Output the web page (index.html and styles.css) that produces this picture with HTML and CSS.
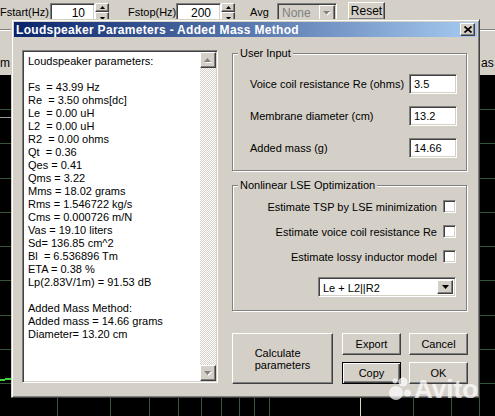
FILE: index.html
```html
<!DOCTYPE html>
<html>
<head>
<meta charset="utf-8">
<link rel="stylesheet" href="styles.css">
</head>
<body>
<div class="app">
  <div class="toolbar">
    <span class="tlabel l1">Fstart(Hz)</span>
    <div class="spin">
      <div class="sunken spin-edit">10</div>
      <div class="spin-btns">
        <div class="raised sbtn"><svg width="5" height="3" viewBox="0 0 5 3"><path d="M2.5 0L5 3H0Z" fill="#000"/></svg></div>
        <div class="raised sbtn"><svg width="5" height="3" viewBox="0 0 5 3"><path d="M0 0H5L2.5 3Z" fill="#000"/></svg></div>
      </div>
    </div>
    <span class="tlabel l2">Fstop(Hz)</span>
    <div class="spin">
      <div class="sunken spin-edit">200</div>
      <div class="spin-btns">
        <div class="raised sbtn"><svg width="5" height="3" viewBox="0 0 5 3"><path d="M2.5 0L5 3H0Z" fill="#000"/></svg></div>
        <div class="raised sbtn"><svg width="5" height="3" viewBox="0 0 5 3"><path d="M0 0H5L2.5 3Z" fill="#000"/></svg></div>
      </div>
    </div>
    <span class="tlabel l3">Avg</span>
    <div class="sunken combo-dis">
      <span class="combo-dis-text">None</span>
      <div class="raised combo-btn"><svg width="8" height="5" viewBox="0 0 8 5"><path d="M1 1H8L4.5 4.5Z" fill="#fff"/><path d="M0 0H7L3.5 3.5Z" fill="#808080"/></svg></div>
    </div>
    <div class="raised btn reset">Reset</div>
  </div>
  <div class="groove"></div>
  <div class="labels-row"><span class="lab-left">m</span><span class="lab-right">as</span></div>
  <div class="plot">
    <svg width="495" height="341" viewBox="0 0 495 341" shape-rendering="crispEdges">
      <g stroke="#35553a" stroke-width="1">
        <line x1="0" y1="34.5" x2="495" y2="34.5"/>
        <line x1="0" y1="68.5" x2="495" y2="68.5"/>
        <line x1="0" y1="103.5" x2="495" y2="103.5"/>
        <line x1="0" y1="137.5" x2="495" y2="137.5"/>
        <line x1="0" y1="171.5" x2="495" y2="171.5"/>
        <line x1="0" y1="205.5" x2="495" y2="205.5"/>
        <line x1="0" y1="240.5" x2="495" y2="240.5"/>
        <line x1="0" y1="274.5" x2="495" y2="274.5"/>
        <line x1="0" y1="308.5" x2="495" y2="308.5"/>
        <line x1="57.5" y1="0" x2="57.5" y2="341"/>
        <line x1="110.5" y1="0" x2="110.5" y2="341"/>
        <line x1="149.5" y1="0" x2="149.5" y2="341"/>
        <line x1="178.5" y1="0" x2="178.5" y2="341"/>
        <line x1="201.5" y1="0" x2="201.5" y2="341"/>
        <line x1="221.5" y1="0" x2="221.5" y2="341"/>
        <line x1="239.5" y1="0" x2="239.5" y2="341"/>
        <line x1="254.5" y1="0" x2="254.5" y2="341"/>
        <line x1="269.5" y1="0" x2="269.5" y2="341"/>
        <line x1="413.5" y1="0" x2="413.5" y2="341"/>
        <line x1="451.5" y1="0" x2="451.5" y2="341"/>
        <line x1="479.5" y1="0" x2="479.5" y2="341"/>
      </g>
      <line x1="360.5" y1="0" x2="360.5" y2="341" stroke="#d8dcb0" stroke-width="1"/>
      <line x1="0" y1="42.5" x2="11" y2="42.5" stroke="#9a9a9a" stroke-width="1"/>
      <line x1="0" y1="305" x2="11" y2="304" stroke="#3fd23f" stroke-width="2"/>
    </svg>
  </div>
</div>

<div class="dialog">
  <div class="title">
    <span class="title-text">Loudspeaker Parameters - Added Mass Method</span>
    <div class="raised close-btn"><svg width="8" height="7" viewBox="0 0 8 7"><path d="M0.5 0.5L7.5 6.5M7.5 0.5L0.5 6.5" stroke="#000" stroke-width="1.7"/></svg></div>
  </div>
  <div class="dbody">
    <div class="sunken memo">
      <div class="memo-text">Loudspeaker parameters:

Fs  = 43.99 Hz
Re  = 3.50 ohms[dc]
Le  = 0.00 uH
L2  = 0.00 uH
R2  = 0.00 ohms
Qt  = 0.36
Qes = 0.41
Qms = 3.22
Mms = 18.02 grams
Rms = 1.546722 kg/s
Cms = 0.000726 m/N
Vas = 19.10 liters
Sd= 136.85 cm^2
Bl  = 6.536896 Tm
ETA = 0.38 %
Lp(2.83V/1m) = 91.53 dB

Added Mass Method:
Added mass = 14.66 grams
Diameter= 13.20 cm</div>
      <div class="scrollbar">
        <div class="raised sb-btn"><svg width="8" height="5" viewBox="0 0 8 5"><path d="M4.5 1L8 5H1Z" fill="#fff"/><path d="M3.5 0L7 4H0Z" fill="#808080"/></svg></div>
        <div class="sb-track"></div>
        <div class="raised sb-btn"><svg width="8" height="5" viewBox="0 0 8 5"><path d="M1 1H8L4.5 5Z" fill="#fff"/><path d="M0 0H7L3.5 4Z" fill="#808080"/></svg></div>
      </div>
    </div>
    <div class="rcol">
      <fieldset class="group g1">
        <legend>User Input</legend>
        <div class="g1-rows">
          <div class="frow"><span>Voice coil resistance Re (ohms)</span><div class="sunken edit">3.5</div></div>
          <div class="frow"><span>Membrane diameter (cm)</span><div class="sunken edit">13.2</div></div>
          <div class="frow"><span>Added mass (g)</span><div class="sunken edit">14.66</div></div>
        </div>
      </fieldset>
      <fieldset class="group g2">
        <legend>Nonlinear LSE Optimization</legend>
        <div class="g2-rows">
          <div class="crow"><span>Estimate TSP by LSE minimization</span><div class="sunken check"></div></div>
          <div class="crow"><span>Estimate voice coil resistance Re</span><div class="sunken check"></div></div>
          <div class="crow"><span>Estimate lossy inductor model</span><div class="sunken check"></div></div>
          <div class="sunken combo">
            <span class="combo-text">Le + L2||R2</span>
            <div class="raised combo-btn"><svg width="7" height="4" viewBox="0 0 7 4"><path d="M0 0H7L3.5 4Z" fill="#000"/></svg></div>
          </div>
        </div>
      </fieldset>
      <div class="buttons">
        <div class="raised btn calc"><span class="calc-text">Calculate<br>parameters</span></div>
        <div class="btn-grid">
          <div class="raised btn">Export</div>
          <div class="raised btn">Cancel</div>
          <div class="raised btn default">Copy</div>
          <div class="raised btn">OK</div>
        </div>
      </div>
    </div>
  </div>
</div>

<div class="watermark">
  <svg width="26" height="26" viewBox="0 0 26 26">
    <circle cx="8" cy="17" r="7" fill="#fff"/>
    <circle cx="15" cy="6" r="4.5" fill="#fff"/>
    <circle cx="19.5" cy="17" r="3.5" fill="#fff"/>
    <circle cx="7" cy="5" r="2.5" fill="#fff"/>
  </svg>
  <span class="wm-text">Avito</span>
</div>
</body>
</html>
```

FILE: styles.css
```css
* { box-sizing: border-box; }

body {
  margin: 0;
  width: 495px;
  height: 416px;
  overflow: hidden;
  position: relative;
  background: #d4d0c8;
  font-family: "Liberation Sans", Arial, sans-serif;
  font-size: 11px;
  color: #000;
}

/* ---------- 3D primitives ---------- */
.sunken {
  background: #fff;
  border: 1px solid;
  border-color: #808080 #fff #fff #808080;
  box-shadow: inset 1px 1px #404040, inset -1px -1px #d4d0c8;
}
.raised {
  background: #d4d0c8;
  border: 1px solid;
  border-color: #fff #404040 #404040 #fff;
  box-shadow: inset -1px -1px #808080;
  display: flex;
  align-items: center;
  justify-content: center;
}

/* ---------- background application ---------- */
.app { display: flex; flex-direction: column; }

.toolbar {
  display: flex;
  align-items: flex-start;
  height: 24px;
  padding-top: 3px;
}
.tlabel {
  flex: none;
  height: 21px;
  line-height: 19px;
  white-space: nowrap;
  font-size: 11px;
}
.l1 { width: 50px; }
.l2 { width: 48px; margin-left: 19px; }
.l3 { width: 27px; margin-left: 15px; }

.spin { flex: none; display: flex; width: 59px; height: 21px; }
.spin-edit {
  width: 45px;
  height: 21px;
  text-align: right;
  padding-right: 9px;
  line-height: 18px;
  font-size: 12px;
}
.spin-btns { width: 14px; display: flex; flex-direction: column; }
.sbtn { height: 9px; }
.sbtn + .sbtn { height: 12px; }

.combo-dis {
  flex: none;
  width: 60px;
  height: 21px;
  background: #d4d0c8;
  display: flex;
  align-items: stretch;
  padding: 1px;
}
.combo-dis-text {
  flex: 1;
  color: #808080;
  line-height: 17px;
  padding-left: 3px;
  font-size: 12px;
}
.combo-btn { width: 16px; flex: none; }

.btn { font-size: 11px; }
.reset {
  flex: none;
  width: 37px;
  height: 18px;
  margin-left: 11px;
  margin-top: -1px;
  font-size: 12px;
}

.groove {
  margin-top: 5px;
  height: 2px;
  border-top: 1px solid #808080;
  border-bottom: 1px solid #fff;
}
.labels-row {
  margin-top: 26px;
  height: 13px;
  line-height: 13px;
  display: grid;
  grid-template-columns: 481px 1fr;
  overflow: hidden;
  font-size: 12px;
}
.plot {
  margin-top: 5px;
  height: 341px;
  background: #000;
}
.plot svg { display: block; }

/* ---------- dialog ---------- */
.dialog {
  position: absolute;
  left: 11px;
  top: 19px;
  width: 469px;
  height: 379px;
  background: #d4d0c8;
  border: 1px solid;
  border-color: #d4d0c8 #404040 #404040 #d4d0c8;
  box-shadow: inset 1px 1px #fff, inset -1px -1px #808080;
  padding: 2px;
  display: flex;
  flex-direction: column;
}
.title {
  height: 15px;
  flex: none;
  background: linear-gradient(to right, #0a246a, #a6caf0);
  display: flex;
  align-items: center;
  justify-content: space-between;
  padding: 0 2px 0 2px;
}
.title-text {
  color: #fff;
  font-weight: bold;
  font-size: 12px;
  letter-spacing: 0.3px;
  white-space: nowrap;
}
.close-btn { width: 15px; height: 13px; }

.dbody {
  display: flex;
  gap: 14px;
  padding: 13px 9px 0 8px;
}

.memo {
  flex: none;
  width: 196px;
  height: 333px;
  padding: 1px;
  display: flex;
}
.memo-text {
  flex: 1;
  white-space: pre;
  line-height: 13px;
  padding: 3px 0 0 4px;
  overflow: hidden;
}
.scrollbar {
  width: 16px;
  flex: none;
  display: flex;
  flex-direction: column;
}
.sb-btn { height: 16px; flex: none; }
.sb-track {
  flex: 1;
  background: repeating-conic-gradient(#d4d0c8 0 25%, #fff 0 50%) 0 0 / 2px 2px;
}

.rcol {
  flex: none;
  width: 236px;
  display: flex;
  flex-direction: column;
}

.group {
  margin: 0;
  padding: 0;
  width: 235px;
  min-width: 0;
  border: 1px solid #808080;
  box-shadow: inset 1px 1px #fff, 1px 1px #fff;
}
.group legend {
  padding: 0 2px;
  margin-left: 5px;
  line-height: 13px;
  background: #d4d0c8;
}
.g1 { margin-top: -3px; }
.g1-rows {
  display: flex;
  flex-direction: column;
  gap: 12px;
  padding: 14px 9px 12px 17px;
}
.frow {
  display: flex;
  align-items: center;
  justify-content: space-between;
  height: 20px;
}
.edit {
  width: 48px;
  height: 20px;
  padding-left: 4px;
  line-height: 18px;
}

.g2 { margin-top: 8px; }
.g2-rows {
  display: flex;
  flex-direction: column;
  align-items: flex-end;
  gap: 12px;
  padding: 8px 10px 13px 10px;
}
.crow {
  display: flex;
  align-items: center;
  gap: 6px;
  height: 13px;
}
.check { width: 13px; height: 13px; }
.combo {
  margin-top: 2px;
  width: 138px;
  height: 20px;
  padding: 2px;
  display: flex;
}
.combo-text {
  flex: 1;
  line-height: 16px;
  padding-left: 2px;
}

.buttons {
  margin-top: 22px;
  display: flex;
  gap: 9px;
}
.calc { width: 101px; height: 51px; }
.calc-text { text-align: left; line-height: 12px; display: inline-block; }
.btn-grid {
  display: grid;
  grid-template-columns: 59px 59px;
  grid-template-rows: 22px 22px;
  column-gap: 8px;
  row-gap: 7px;
}
.btn.default {
  border: 1px solid #000;
  box-shadow: inset 1px 1px #fff, inset -1px -1px #404040, inset -2px -2px #808080;
}

/* ---------- watermark overlay ---------- */
.watermark {
  position: absolute;
  left: 388px;
  top: 376px;
  display: flex;
  align-items: center;
  opacity: 0.72;
}
.wm-text {
  color: #fff;
  font-family: "Liberation Sans", Arial, sans-serif;
  font-weight: bold;
  font-size: 26px;
  line-height: 26px;
}
```
